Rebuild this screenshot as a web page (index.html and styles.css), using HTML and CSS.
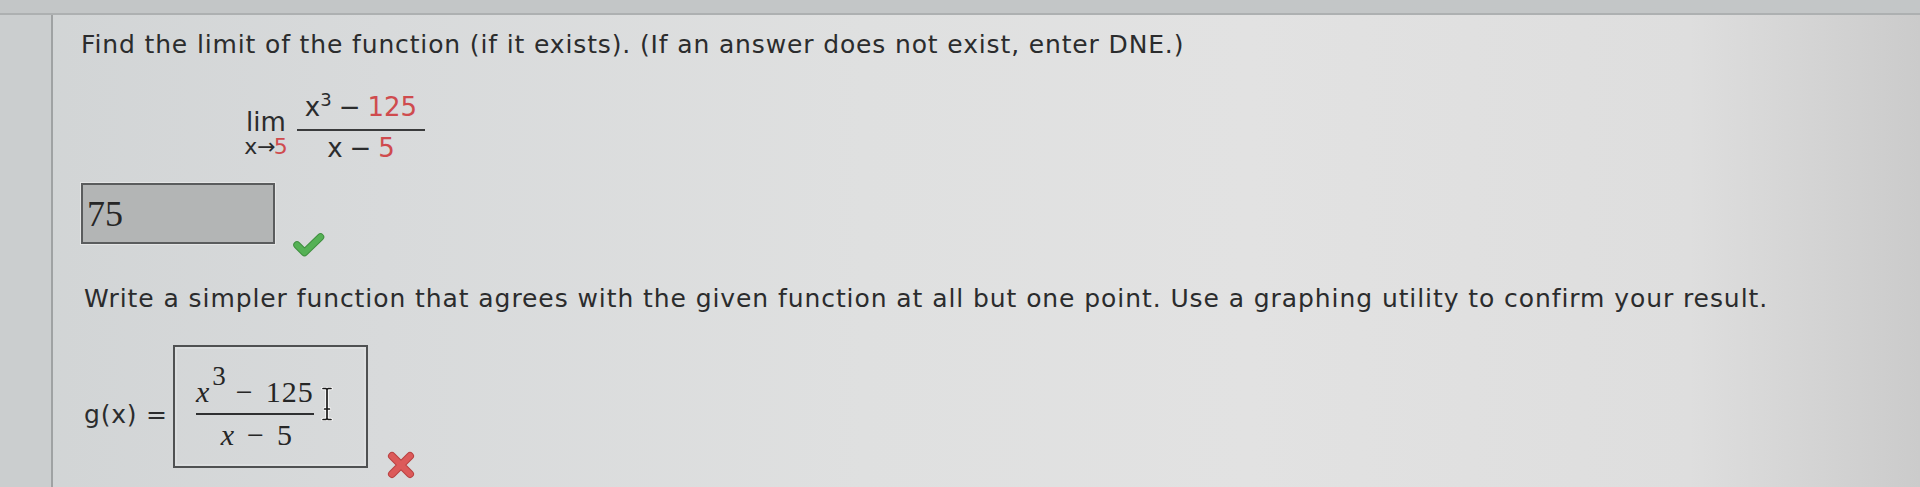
FILE: index.html
```html
<!DOCTYPE html>
<html>
<head>
<meta charset="utf-8">
<link rel="stylesheet" href="styles.css">
</head>
<body>
<div class="top"></div>
<div class="frame">
  <div class="side"></div>
  <main class="main">
    <p class="q">Find the limit of the function (if it exists). (If an answer does not exist, enter DNE.)</p>
    <div class="limit">
      <div class="lim">
        <span class="lim-word">lim</span>
        <span class="lim-sub">x<span class="arrow">→</span><span class="red">5</span></span>
      </div>
      <div class="frac">
        <span class="num">x<sup class="sup">3</sup><span class="op">−</span><span class="red">125</span></span>
        <span class="den">x<span class="op">−</span><span class="red">5</span></span>
      </div>
    </div>
    <div class="answer-row">
      <div class="ans-box">75</div>
      <svg class="check" width="32" height="26" viewBox="0 0 32 26">
        <path d="M4 13 L11.5 20.5 L27.5 5" fill="none" stroke="#3f8f3f" stroke-width="7.5" stroke-linecap="round" stroke-linejoin="round"/>
        <path d="M4 13 L11.5 20.5 L27.5 5" fill="none" stroke="#55b155" stroke-width="5.5" stroke-linecap="round" stroke-linejoin="round"/>
      </svg>
    </div>
    <p class="q q2">Write a simpler function that agrees with the given function at all but one point. Use a graphing utility to confirm your result.</p>
    <div class="g-row">
      <span class="g-label">g(x) =</span>
      <div class="g-box">
        <div class="mfrac">
          <span class="mnum"><i class="var">x</i><sup class="msup">3</sup><span class="bin">−</span><span class="dig">125</span></span>
          <span class="mden"><i class="var">x</i><span class="bin">−</span><span class="dig">5</span></span>
        </div>
        <svg class="ibeam" width="12" height="34" viewBox="0 0 12 34">
          <path d="M2 1.5 H5 L6 2.5 L7 1.5 H10 M6 2.5 V31.5 M3.5 22 H8.5 M2 32.5 H5 L6 31.5 L7 32.5 H10" fill="none" stroke="#ffffff" stroke-width="3.4" stroke-linecap="round"/>
          <path d="M2 1.5 H5 L6 2.5 L7 1.5 H10 M6 2.5 V31.5 M3.5 22 H8.5 M2 32.5 H5 L6 31.5 L7 32.5 H10" fill="none" stroke="#1a1a1a" stroke-width="1.7" stroke-linecap="round"/>
        </svg>
      </div>
      <svg class="cross" width="30" height="30" viewBox="0 0 30 30">
        <path d="M6 6 L24 24 M24 6 L6 24" fill="none" stroke="#b94242" stroke-width="8" stroke-linecap="round"/>
        <path d="M6 6 L24 24 M24 6 L6 24" fill="none" stroke="#dc5a5a" stroke-width="6" stroke-linecap="round"/>
      </svg>
    </div>
  </main>
</div>
</body>
</html>
```

FILE: styles.css
```css
html, body {
  margin: 0;
  padding: 0;
}
body {
  width: 1920px;
  height: 487px;
  overflow: hidden;
  background: linear-gradient(90deg, #d1d4d5 0%, #d8dadb 20%, #dfe0e0 45%, #e2e2e2 65%, #dedede 88%, #cbcbcb 100%);
  font-family: "DejaVu Sans", Verdana, sans-serif;
  color: #2b2c2d;
}
.top {
  height: 13px;
  background: #c3c6c7;
  border-bottom: 2px solid #adb0b1;
}
.frame {
  display: flex;
  height: 472px;
}
.side {
  flex: none;
  width: 51px;
  background: #cbcecf;
  border-right: 2px solid #9fa2a3;
}
.main {
  flex: 1;
  padding: 15px 0 0 28px;
}
.q {
  margin: 0;
  font-size: 25px;
  letter-spacing: 0.86px;
  line-height: 30px;
  white-space: nowrap;
}
.q2 {
  margin: 40px 0 0 3px;
  letter-spacing: 0.92px;
}
.red {
  color: #cf4b4e;
}
.limit {
  display: flex;
  align-items: flex-start;
  margin: 33px 0 0 159px;
}
.lim {
  display: flex;
  flex-direction: column;
  align-items: center;
  width: 52px;
  padding-top: 17px;
  margin-right: 5px;
}
.lim-word {
  font-size: 26px;
  line-height: 24px;
}
.lim-sub {
  font-size: 22px;
  line-height: 20px;
  margin-top: 3px;
}
.arrow {
  letter-spacing: -2px;
}
.frac {
  display: flex;
  flex-direction: column;
  align-items: center;
  width: 128px;
  font-size: 26px;
  line-height: 28px;
}
.num {
  align-self: stretch;
  text-align: center;
  padding-bottom: 8px;
  border-bottom: 2px solid #3a3b3c;
  white-space: nowrap;
}
.den {
  padding-top: 3px;
  white-space: nowrap;
}
.sup {
  font-size: 18px;
  line-height: 0;
  vertical-align: 10px;
}
.op {
  margin: 0 7px;
}
.answer-row {
  display: flex;
  align-items: flex-end;
  margin-top: 21px;
}
.ans-box {
  box-sizing: border-box;
  width: 194px;
  height: 61px;
  padding: 9px 0 0 4px;
  background: #b3b5b5;
  border: 2px solid #5a5c5d;
  box-shadow: 0 0 0 1px #e4e5e5;
  font-family: "Liberation Serif", "Times New Roman", serif;
  font-size: 36px;
  line-height: 40px;
  color: #262626;
}
.check {
  margin: 0 0 -14px 18px;
}
.g-row {
  display: flex;
  align-items: flex-start;
  margin: 31px 0 0 3px;
}
.g-label {
  font-size: 25px;
  letter-spacing: 0.8px;
  line-height: 30px;
  margin-top: 55px;
  margin-right: 5px;
  white-space: nowrap;
}
.g-box {
  position: relative;
  box-sizing: border-box;
  width: 195px;
  height: 123px;
  padding: 29px 0 0 21px;
  border: 2px solid #4f5152;
  box-shadow: inset 0 0 0 2px rgba(255, 255, 255, 0.18);
}
.mfrac {
  display: inline-flex;
  flex-direction: column;
  align-items: center;
  font-family: "Liberation Serif", "Times New Roman", serif;
  font-size: 30px;
  line-height: 32px;
  color: #262626;
}
.mnum {
  padding-bottom: 5px;
  border-bottom: 2px solid #2f3031;
  white-space: nowrap;
}
.mden {
  padding-top: 4px;
  padding-left: 4px;
  white-space: nowrap;
}
.var {
  margin-right: 3px;
}
.msup {
  font-size: 27px;
  line-height: 0;
  vertical-align: 17px;
}
.bin {
  margin: 0 13px 0 10px;
}
.dig {
  letter-spacing: 1px;
}
.ibeam {
  position: absolute;
  left: 146px;
  top: 40px;
}
.cross {
  margin: 0 0 -12px 18px;
  align-self: flex-end;
}
```
